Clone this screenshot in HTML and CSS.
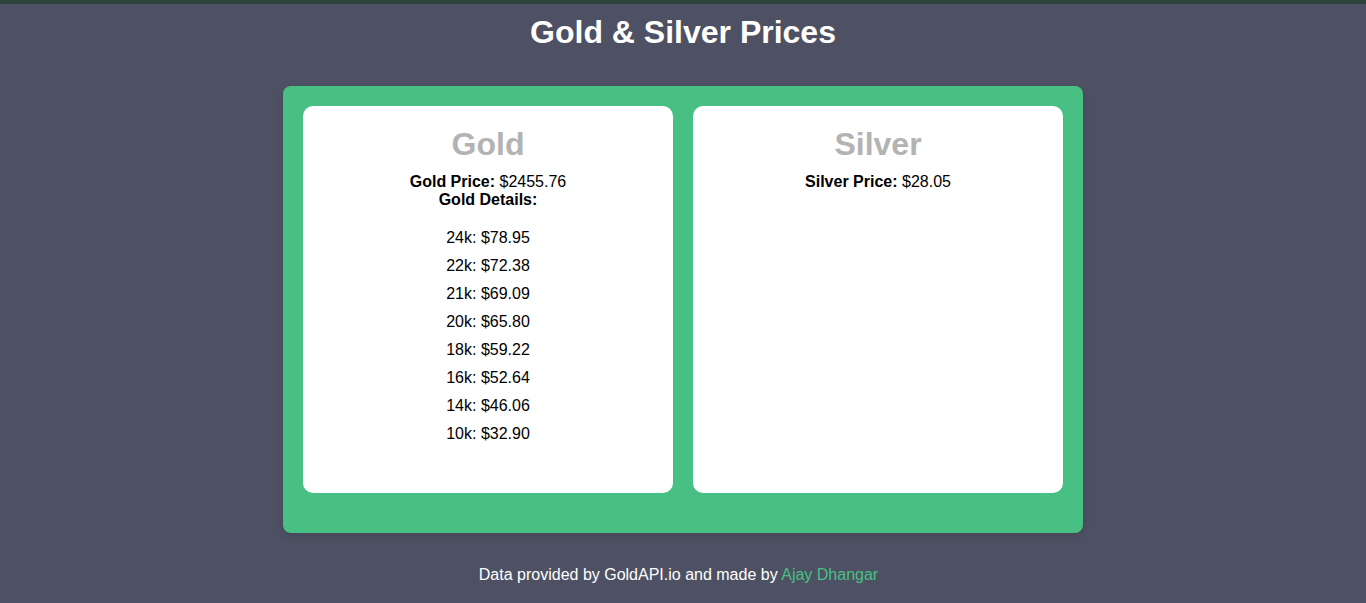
FILE: index.html
```html
<!DOCTYPE html>
<html lang="en">
<head>
<meta charset="utf-8">
<title>Gold &amp; Silver Prices</title>
<link rel="stylesheet" href="styles.css">
</head>
<body>
<div class="topbar"></div>
<h1 class="title">Gold &amp; Silver Prices</h1>
<main class="panel">
  <section class="card">
    <h2 class="card-title">Gold</h2>
    <p class="line first"><strong>Gold Price:</strong> $2455.76</p>
    <p class="line"><strong>Gold Details:</strong></p>
    <ul class="details">
      <li>24k: $78.95</li>
      <li>22k: $72.38</li>
      <li>21k: $69.09</li>
      <li>20k: $65.80</li>
      <li>18k: $59.22</li>
      <li>16k: $52.64</li>
      <li>14k: $46.06</li>
      <li>10k: $32.90</li>
    </ul>
  </section>
  <section class="card">
    <h2 class="card-title">Silver</h2>
    <p class="line first"><strong>Silver Price:</strong> $28.05</p>
  </section>
</main>
<footer class="footer">Data provided by GoldAPI.io and made by <a href="#" class="author">Ajay Dhangar</a></footer>
</body>
</html>
```
FILE: styles.css
```css
html, body {
  margin: 0;
  padding: 0;
}
body {
  background: #4e5163;
  font-family: "Liberation Sans", Arial, sans-serif;
  color: #fff;
  height: 603px;
  overflow: hidden;
}
.topbar {
  height: 4px;
  background: #2c433a;
}
.title {
  margin: 10px 0 0;
  text-align: center;
  font-size: 32px;
  line-height: 37px;
  font-weight: bold;
  color: #fff;
}
.panel {
  width: 800px;
  box-sizing: border-box;
  margin: 35px auto 0;
  padding: 20px 20px 40px;
  background: #48c084;
  border-radius: 8px;
  box-shadow: 0 4px 8px rgba(0, 0, 0, 0.12);
  display: flex;
  gap: 20px;
}
.card {
  flex: 1;
  background: #fff;
  border-radius: 10px;
  padding: 20px 20px 0;
  height: 387px;
  box-sizing: border-box;
  text-align: center;
  color: #000;
}
.card-title {
  margin: 0;
  font-size: 32px;
  line-height: 37px;
  font-weight: bold;
  color: #b3b3b3;
}
.line {
  margin: 0;
  font-size: 16px;
  line-height: 18px;
}
.line.first {
  margin-top: 10px;
}
.details {
  list-style: none;
  margin: 15px 0 0;
  padding: 0;
  font-size: 16px;
  line-height: 18px;
}
.details li {
  padding: 5px 0;
}
.footer {
  margin-top: 33px;
  padding-right: 9px;
  text-align: center;
  font-size: 16px;
  line-height: 18px;
}
.author {
  color: #48c084;
  text-decoration: none;
}
```
